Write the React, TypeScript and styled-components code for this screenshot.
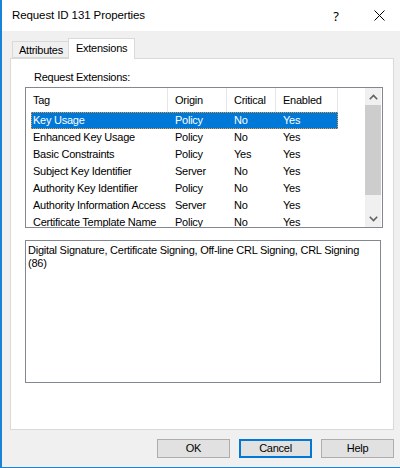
import React from "react";
import styled, { createGlobalStyle } from "styled-components";

const GlobalStyle = createGlobalStyle`
    html, body {
        margin: 0;
        padding: 0;
        background: #ffffff;
        overflow: hidden;
    }
    * {
        box-sizing: border-box;
    }
`;

interface Extension {
    tag: string;
    origin: string;
    critical: string;
    enabled: string;
}

const extensions: Extension[] = [
    { tag: "Key Usage", origin: "Policy", critical: "No", enabled: "Yes" },
    { tag: "Enhanced Key Usage", origin: "Policy", critical: "No", enabled: "Yes" },
    { tag: "Basic Constraints", origin: "Policy", critical: "Yes", enabled: "Yes" },
    { tag: "Subject Key Identifier", origin: "Server", critical: "No", enabled: "Yes" },
    { tag: "Authority Key Identifier", origin: "Policy", critical: "No", enabled: "Yes" },
    { tag: "Authority Information Access", origin: "Server", critical: "No", enabled: "Yes" },
    { tag: "Certificate Template Name", origin: "Policy", critical: "No", enabled: "Yes" },
];

const headerWidths = [142, 59, 49, 62];
const cellWidths = [137, 59, 49, 62];
const headers = ["Tag", "Origin", "Critical", "Enabled"];

export default function App() {
    return (
        <>
            <GlobalStyle />
            <Window>
                <TitleBar>
                    <Title>Request ID 131 Properties</Title>
                    <HelpGlyph>?</HelpGlyph>
                    <CloseButton>
                        <svg width="11" height="11" viewBox="0 0 11 11">
                            <path d="M0.5 0.5 L10.5 10.5 M10.5 0.5 L0.5 10.5" stroke="#000" strokeWidth="1" />
                        </svg>
                    </CloseButton>
                </TitleBar>
                <Body>
                    <TabStrip>
                        <Tab>Attributes</Tab>
                        <Tab selected>Extensions</Tab>
                    </TabStrip>
                    <Panel>
                        <Label>Request Extensions:</Label>
                        <ListView>
                            <ListContent>
                                <HeaderRow>
                                    {headers.map((h, i) => (
                                        <HeaderCell key={h} style={{ width: headerWidths[i] }}>
                                            {h}
                                        </HeaderCell>
                                    ))}
                                </HeaderRow>
                                {extensions.map((ext, idx) => (
                                    <Row key={ext.tag} selected={idx === 0}>
                                        {[ext.tag, ext.origin, ext.critical, ext.enabled].map((v, i) => (
                                            <Cell key={i} first={i === 0} style={{ width: cellWidths[i] }}>
                                                {v}
                                            </Cell>
                                        ))}
                                    </Row>
                                ))}
                            </ListContent>
                            <ScrollBar>
                                <ScrollArrow>
                                    <svg width="9" height="6" viewBox="0 0 9 6">
                                        <path d="M0.8 5.2 L4.5 1.5 L8.2 5.2" stroke="#606060" strokeWidth="1.6" fill="none" />
                                    </svg>
                                </ScrollArrow>
                                <Thumb />
                                <Track />
                                <ScrollArrow>
                                    <svg width="9" height="6" viewBox="0 0 9 6">
                                        <path d="M0.8 0.8 L4.5 4.5 L8.2 0.8" stroke="#606060" strokeWidth="1.6" fill="none" />
                                    </svg>
                                </ScrollArrow>
                            </ScrollBar>
                        </ListView>
                        <DetailBox>
                            Digital Signature, Certificate Signing, Off-line CRL Signing, CRL Signing
                            <br />
                            (86)
                        </DetailBox>
                    </Panel>
                    <Footer>
                        <Button>OK</Button>
                        <Button focused>Cancel</Button>
                        <Button>Help</Button>
                    </Footer>
                </Body>
            </Window>
        </>
    );
}

const Window = styled.div`
    width: 400px;
    height: 468px;
    background: #f0f0f0;
    border-left: 2px solid #1883d7;
    border-bottom: 1px solid #1883d7;
    display: flex;
    flex-direction: column;
    font-family: "Liberation Sans", Arial, sans-serif;
    font-size: 11px;
    letter-spacing: -0.25px;
    color: #000;
`;

const TitleBar = styled.div`
    height: 31px;
    background: #ffffff;
    display: flex;
    align-items: center;
    padding-left: 10px;
`;

const Title = styled.div`
    flex: 1;
    min-width: 0;
    font-family: "Liberation Sans", Arial, sans-serif;
    font-size: 11.5px;
    letter-spacing: -0.1px;
    color: #000;
    padding-bottom: 1px;
`;

const HelpGlyph = styled.div`
    width: 44px;
    flex-shrink: 0;
    text-align: center;
    font-family: "Noto Sans", sans-serif;
    font-size: 13px;
    letter-spacing: 0;
`;

const CloseButton = styled.div`
    width: 42px;
    height: 31px;
    flex-shrink: 0;
    display: flex;
    align-items: center;
    justify-content: center;
`;

const Body = styled.div`
    flex: 1;
    display: flex;
    flex-direction: column;
    padding: 0 6px 0 8px;
`;

const TabStrip = styled.div`
    height: 27px;
    display: flex;
    align-items: flex-end;
    padding-left: 2px;
    position: relative;
    z-index: 1;
`;

const Tab = styled.div<{ selected?: boolean }>`
    height: ${(p) => (p.selected ? "21px" : "17px")};
    margin-bottom: ${(p) => (p.selected ? "-1px" : "0")};
    padding: ${(p) => (p.selected ? "3px 7px 0 7px" : "2px 5px 0 6px")};
    background: ${(p) => (p.selected ? "#ffffff" : "#f0f0f0")};
    border: 1px solid #d9d9d9;
    border-bottom: ${(p) => (p.selected ? "none" : "1px solid #d9d9d9")};
    border-right: ${(p) => (p.selected ? "1px solid #d9d9d9" : "none")};
    line-height: 13px;
    white-space: nowrap;
`;

const Panel = styled.div`
    width: 384px;
    height: 372px;
    background: #ffffff;
    border: 1px solid #d9d9d9;
    padding: 12px 0 0 14px;
    display: flex;
    flex-direction: column;
`;

const Label = styled.div`
    line-height: 13px;
    margin-left: 9px;
    margin-bottom: 3px;
`;

const ListView = styled.div`
    width: 358px;
    height: 141px;
    border: 1px solid #828790;
    display: flex;
    overflow: hidden;
`;

const ListContent = styled.div`
    flex: 1;
    overflow: hidden;
`;

const HeaderRow = styled.div`
    height: 24px;
    display: flex;
`;

const HeaderCell = styled.div`
    height: 24px;
    line-height: 24px;
    padding-left: 7px;
    border-right: 1px solid #e5e5e5;
    white-space: nowrap;
    flex-shrink: 0;
`;

const Row = styled.div<{ selected?: boolean }>`
    height: 17px;
    width: 307px;
    margin-left: 5px;
    display: flex;
    background: ${(p) => (p.selected ? "#0078d7" : "transparent")};
    color: ${(p) => (p.selected ? "#ffffff" : "#000000")};
    outline: ${(p) => (p.selected ? "1px dotted #f39a2b" : "none")};
    outline-offset: -1px;
`;

const Cell = styled.div<{ first?: boolean }>`
    line-height: 17px;
    padding-left: ${(p) => (p.first ? "2px" : "7px")};
    white-space: nowrap;
    overflow: hidden;
    flex-shrink: 0;
`;

const ScrollBar = styled.div`
    width: 16px;
    margin-right: 1px;
    background: #f0f0f0;
    display: flex;
    flex-direction: column;
`;

const ScrollArrow = styled.div`
    height: 17px;
    display: flex;
    align-items: center;
    justify-content: center;
`;

const Thumb = styled.div`
    height: 90px;
    background: #cdcdcd;
`;

const Track = styled.div`
    flex: 1;
`;

const DetailBox = styled.div`
    margin-top: 12px;
    width: 356px;
    height: 143px;
    border: 1px solid #828790;
    padding: 3px 2px;
    line-height: 13px;
`;

const Footer = styled.div`
    display: flex;
    justify-content: flex-end;
    gap: 9px;
    padding-top: 9px;
`;

const Button = styled.div<{ focused?: boolean }>`
    width: 73px;
    height: 19px;
    background: #e1e1e1;
    border: ${(p) => (p.focused ? "2px solid #0078d7" : "1px solid #adadad")};
    display: flex;
    align-items: center;
    justify-content: center;
    line-height: 13px;
`;
